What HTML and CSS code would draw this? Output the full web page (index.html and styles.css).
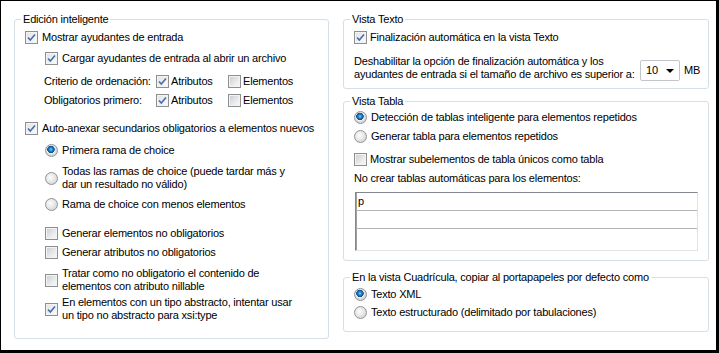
FILE: index.html
```html
<!DOCTYPE html>
<html lang="es">
<head>
    <meta charset="UTF-8">
    <title>Opciones de edición</title>
    <link rel="stylesheet" href="styles.css">
</head>
<body>
    <div class="window">
        <fieldset class="group smart">
            <legend>Edición inteligente</legend>

            <label class="row show"><span class="cb on"><svg viewBox="0 0 11 11"><path d="M2 5.5 L4.3 8 L9 2.5"/></svg></span>Mostrar ayudantes de entrada</label>
            <label class="row sub load"><span class="cb on"><svg viewBox="0 0 11 11"><path d="M2 5.5 L4.3 8 L9 2.5"/></svg></span>Cargar ayudantes de entrada al abrir un archivo</label>

            <div class="order">
                <span>Criterio de ordenación:</span>
                <label class="row"><span class="cb on"><svg viewBox="0 0 11 11"><path d="M2 5.5 L4.3 8 L9 2.5"/></svg></span>Atributos</label>
                <label class="row"><span class="cb"></span>Elementos</label>
                <span>Obligatorios primero:</span>
                <label class="row"><span class="cb on"><svg viewBox="0 0 11 11"><path d="M2 5.5 L4.3 8 L9 2.5"/></svg></span>Atributos</label>
                <label class="row"><span class="cb"></span>Elementos</label>
            </div>

            <label class="row append"><span class="cb on"><svg viewBox="0 0 11 11"><path d="M2 5.5 L4.3 8 L9 2.5"/></svg></span>Auto-anexar secundarios obligatorios a elementos nuevos</label>
            <label class="row sub first"><span class="rb on"></span>Primera rama de choice</label>
            <label class="row sub all"><span class="rb"></span>Todas las ramas de choice (puede tardar más y<br>dar un resultado no válido)</label>
            <label class="row sub fewest"><span class="rb"></span>Rama de choice con menos elementos</label>

            <label class="row sub gen-el"><span class="cb"></span>Generar elementos no obligatorios</label>
            <label class="row sub gen-at"><span class="cb"></span>Generar atributos no obligatorios</label>
            <label class="row sub nill"><span class="cb"></span>Tratar como no obligatorio el contenido de<br>elementos con atributo nillable</label>
            <label class="row sub abstract"><span class="cb on"><svg viewBox="0 0 11 11"><path d="M2 5.5 L4.3 8 L9 2.5"/></svg></span>En elementos con un tipo abstracto, intentar usar<br>un tipo no abstracto para xsi:type</label>
        </fieldset>

        <div class="right">
            <fieldset class="group text-view">
                <legend>Vista Texto</legend>
                <label class="row finish"><span class="cb on"><svg viewBox="0 0 11 11"><path d="M2 5.5 L4.3 8 L9 2.5"/></svg></span>Finalización automática en la vista Texto</label>
                <div class="limit">
                    <span class="limit-text">Deshabilitar la opción de finalización automática y los<br>ayudantes de entrada si el tamaño de archivo es superior a:</span>
                    <span class="select">10<span class="arrow"></span></span>
                    <span class="unit">MB</span>
                </div>
            </fieldset>

            <fieldset class="group table-view">
                <legend>Vista Tabla</legend>
                <label class="row detect"><span class="rb on"></span>Detección de tablas inteligente para elementos repetidos</label>
                <label class="row repeat"><span class="rb"></span>Generar tabla para elementos repetidos</label>
                <label class="row single"><span class="cb"></span>Mostrar subelementos de tabla únicos como tabla</label>
                <div class="row no-auto">No crear tablas automáticas para los elementos:</div>
                <div class="list">
                    <div class="cell">p</div>
                    <div class="cell"></div>
                    <div class="cell"></div>
                </div>
            </fieldset>

            <fieldset class="group grid-view">
                <legend>En la vista Cuadrícula, copiar al portapapeles por defecto como</legend>
                <label class="row xml"><span class="rb on"></span>Texto XML</label>
                <label class="row tabbed"><span class="rb"></span>Texto estructurado (delimitado por tabulaciones)</label>
            </fieldset>
        </div>
    </div>
</body>
</html>
```

FILE: styles.css
```css
* {
    box-sizing: border-box;
}

body {
    margin: 0;
    background: #fff;
    color: #000;
    font-family: "Liberation Sans", Arial, sans-serif;
    font-size: 11px;
    line-height: 13px;
    letter-spacing: -0.2px;
}

.window {
    width: 719px;
    height: 353px;
    border: solid #000;
    border-width: 1px 3px 3px 1px;
    padding: 12px 0 0 13px;
    display: flex;
    gap: 14px;
    align-items: flex-start;
}

.group {
    margin: 0;
    padding: 0 0 0 10px;
    border: 1px solid #d5dfe5;
    border-radius: 3px;
    min-width: 0;
}

legend {
    padding: 0 2px;
    margin-left: -4px;
    line-height: 13px;
}

.row {
    display: flex;
    align-items: center;
    min-height: 13px;
}

.sub {
    margin-left: 20px;
}

/* checkbox, Vista look */
.cb {
    flex: none;
    width: 13px;
    height: 13px;
    margin-right: 4px;
    border: 1px solid #8f8f8f;
    background: linear-gradient(135deg, #c9ccd1, #eef0f1 70%, #f6f6f6);
    box-shadow: inset 0 0 0 1px #f3f3f3;
    display: flex;
    align-items: center;
    justify-content: center;
}

.cb.on {
    background: linear-gradient(135deg, #dfe3e8, #fbfbfb);
}

.cb svg {
    width: 11px;
    height: 11px;
}

.cb path {
    fill: none;
    stroke: #4a6cab;
    stroke-width: 1.6;
}

.rb {
    flex: none;
    width: 13px;
    height: 13px;
    margin-right: 4px;
    border: 1px solid #939393;
    border-radius: 50%;
    background: radial-gradient(circle at 40% 40%, #fdfdfd, #e4e5e6 50%, #c9cbcd);
}

.rb.on {
    background: radial-gradient(circle at 45% 40%, #8fd6ff 0, #2a8ad0 1.5px, #0d4f8e 3.5px, #f2f2f2 4px, #dcdddf 5px, #c5c7c9);
}

/* Edición inteligente */
.smart {
    width: 315px;
    padding-bottom: 16px;
}

.show {
    margin-top: 5px;
}

.load {
    margin-top: 8px;
}

.order {
    display: grid;
    grid-template-columns: 112px 72px auto;
    row-gap: 6px;
    align-items: center;
    margin: 10px 0 0 19px;
}

.order .cb {
    margin-right: 2px;
}

.append {
    margin-top: 15px;
}

.first {
    margin-top: 9px;
}

.all {
    margin-top: 8px;
}

.fewest {
    margin-top: 7px;
}

.gen-el {
    margin-top: 16px;
}

.gen-at {
    margin-top: 6px;
}

.nill {
    margin-top: 8px;
}

.abstract {
    margin-top: 3px;
}

/* columna derecha */
.right {
    width: 366px;
    display: flex;
    flex-direction: column;
}

.text-view {
    padding-bottom: 7px;
}

.finish {
    margin-top: 5px;
}

.finish .cb,
.single .cb {
    margin-right: 3px;
}

.limit {
    display: flex;
    align-items: flex-end;
    margin-top: 11px;
}

.limit-text {
    width: 286px;
}

.select {
    position: relative;
    width: 40px;
    height: 21px;
    border: 1px solid #c2c5ca;
    border-radius: 2px;
    padding: 3px 0 0 5px;
}

.arrow {
    position: absolute;
    right: 5px;
    top: 8px;
    border: 4px solid transparent;
    border-top: 4px solid #000;
    border-bottom: 0;
}

.unit {
    margin-left: 4px;
    padding-bottom: 4px;
}

.table-view {
    margin-top: 6px;
    padding-bottom: 9px;
}

.detect {
    margin-top: 3px;
}

.repeat {
    margin-top: 6px;
}

.single {
    margin-top: 10px;
}

.no-auto {
    margin-top: 6px;
}

.list {
    width: 343px;
    height: 59px;
    margin: 7px 0 0 1px;
    border: 1px solid;
    border-color: #828790 #e3e3e3 #e3e3e3 #828790;
    box-shadow: inset 1px 0 0 #a0a0a0;
}

.cell {
    height: 18px;
    padding: 2px 0 0 2px;
    border-bottom: 1px solid #b4b4b4;
}

.cell:last-child {
    border-bottom: none;
}

.grid-view {
    margin-top: 10px;
    padding-bottom: 12px;
}

.xml {
    margin-top: 4px;
}

.tabbed {
    margin-top: 5px;
}
```
